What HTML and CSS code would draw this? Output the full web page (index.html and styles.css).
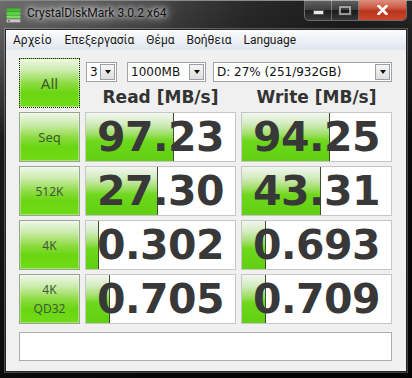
FILE: index.html
```html
<!DOCTYPE html>
<html lang="el">
<head>
<meta charset="utf-8">
<title>CrystalDiskMark 3.0.2 x64</title>
<link rel="stylesheet" href="styles.css">
</head>
<body>
<div class="window">
    <div class="titlebar">
        <svg class="app-icon" width="15" height="15" viewBox="0 0 15 15">
            <rect x="0.5" y="0.5" width="14" height="3" rx="1" fill="#39c424"/>
            <rect x="0.5" y="4" width="14" height="3" rx="1" fill="#52d83a"/>
            <rect x="0.5" y="7.5" width="14" height="3" rx="1" fill="#7ce060"/>
            <rect x="0.5" y="11" width="14" height="3.5" rx="0.8" fill="#c8c8c8" stroke="#7a7a7a" stroke-width="0.6"/>
            <rect x="2" y="12.2" width="2" height="1.2" fill="#555"/>
        </svg>
        <span class="title">CrystalDiskMark 3.0.2 x64</span>
        <div class="caption">
            <div class="cap-btn cap-min"><span class="glyph-min"></span></div>
            <div class="cap-btn cap-max"><span class="glyph-max"></span></div>
            <div class="cap-btn cap-close">
                <svg width="11" height="10" viewBox="0 0 11 10">
                    <path d="M1.5 1 L9.5 9 M9.5 1 L1.5 9" stroke="#fff" stroke-width="2.6" stroke-linecap="square"/>
                </svg>
            </div>
        </div>
    </div>

    <div class="client">
        <div class="menubar">
            <span class="menu-item">Αρχείο</span>
            <span class="menu-item">Επεξεργασία</span>
            <span class="menu-item">Θέμα</span>
            <span class="menu-item">Βοήθεια</span>
            <span class="menu-item">Language</span>
        </div>

        <div class="panel">
            <div class="grid">
                <div class="label-btn all">All</div>
                <div class="head">
                    <div class="selects">
                        <div class="combo combo-count"><span>3</span><i class="arrow"></i></div>
                        <div class="combo combo-size"><span>1000MB</span><i class="arrow"></i></div>
                        <div class="combo combo-drive"><span>D: 27% (251/932GB)</span><i class="arrow"></i></div>
                    </div>
                    <div class="heads">
                        <div class="head-title">Read [MB/s]</div>
                        <div class="head-title">Write [MB/s]</div>
                    </div>
                </div>

                <div class="label-btn seq">Seq</div>
                <div class="cell" style="--w:88px">97.23</div>
                <div class="cell" style="--w:88px">94.25</div>

                <div class="label-btn small">512K</div>
                <div class="cell" style="--w:72px">27.30</div>
                <div class="cell" style="--w:79px">43.31</div>

                <div class="label-btn small">4K</div>
                <div class="cell" style="--w:13px">0.302</div>
                <div class="cell" style="--w:24px">0.693</div>

                <div class="label-btn small two-line">4K<br>QD32</div>
                <div class="cell" style="--w:24px">0.705</div>
                <div class="cell" style="--w:24px">0.709</div>
            </div>
            <div class="comment"></div>
        </div>
    </div>
</div>
</body>
</html>
```

FILE: styles.css
```css
html, body {
    margin: 0;
    padding: 0;
    background: #0c0c0c;
}

.window {
    width: 412px;
    height: 378px;
    display: flex;
    flex-direction: column;
    background:
        linear-gradient(to bottom, rgba(0,0,0,0) 0, rgba(0,0,0,0.2) 40px, rgba(0,0,0,0.75) 140px, rgba(0,0,0,0.9) 100%),
        linear-gradient(to right, #6e6e6e 0, #4e4e4e 30%, #2a2a2a 60%, #1c1c1c 85%, #262626 100%);
    box-shadow: inset 0 1px 0 #8a8a8a;
}

/* ---------- title bar ---------- */
.titlebar {
    height: 29px;
    display: flex;
    align-items: flex-start;
    padding-left: 6px;
}
.app-icon {
    margin-top: 8px;
    flex: none;
}
.title {
    margin-left: 6px;
    margin-top: 6px;
    font-family: Roboto, "Noto Sans", sans-serif;
    font-size: 12px;
    color: #111;
    text-shadow: 0 0 4px #e4e4e4, 0 0 8px #d8d8d8, 0 0 14px rgba(210,210,210,0.9), 0 0 20px rgba(190,190,190,0.7);
}
.caption {
    margin-left: auto;
    margin-right: 5px;
    display: flex;
    height: 20px;
    border: 1px solid rgba(255,255,255,0.35);
    border-top: none;
    border-radius: 0 0 5px 5px;
    overflow: hidden;
}
.cap-btn {
    display: flex;
    align-items: center;
    justify-content: center;
    height: 20px;
}
.cap-min, .cap-max {
    width: 26px;
    background: linear-gradient(to bottom, rgba(255,255,255,0.3), rgba(255,255,255,0.14) 50%, rgba(0,0,0,0.08) 51%, rgba(255,255,255,0.12));
    border-right: 1px solid rgba(255,255,255,0.3);
}
.glyph-min {
    width: 9px;
    height: 3px;
    margin-top: 5px;
    background: #e8e8e8;
    border: 1px solid #555;
}
.glyph-max {
    width: 8px;
    height: 5px;
    border: 2px solid rgba(200,200,200,0.7);
    box-shadow: 0 0 0 1px rgba(60,60,60,0.6);
}
.cap-close {
    width: 47px;
    background: linear-gradient(to bottom, #dc8f7e 0, #cc5a42 40%, #b8341b 55%, #c9472a 100%);
}

/* ---------- client ---------- */
.client {
    flex: 1;
    margin: 0 5px 6px 5px;
    background: #f0f0f0;
    border: 1px solid #262626;
    box-shadow: 0 0 0 1px rgba(255,255,255,0.25);
    display: flex;
    flex-direction: column;
}
.menubar {
    height: 20px;
    display: flex;
    align-items: center;
    padding-left: 1px;
    background: linear-gradient(to bottom, #fdfdfe 0, #eef1f6 50%, #dfe5ee 100%);
    font-family: Roboto, "Noto Sans", sans-serif;
    font-size: 12px;
    color: #1a1a1a;
}
.menu-item {
    padding: 0 6px;
}
.menu-item:first-child {
    padding-left: 6px;
    padding-right: 7px;
}

.panel {
    padding: 8px 13px 0 13px;
}
.grid {
    display: grid;
    grid-template-columns: 61px 151px 151px;
    grid-template-rows: repeat(5, 50px);
    column-gap: 5px;
    row-gap: 4px;
}

/* ---------- green label buttons ---------- */
.label-btn {
    box-sizing: border-box;
    display: flex;
    align-items: center;
    justify-content: center;
    text-align: center;
    border: 1px solid #97a48e;
    background: linear-gradient(to bottom, #eef7e8 0, #c9eba8 25%, #8fdc45 50%, #6ad612 70%, #70dc18 100%);
    box-shadow: inset 0 0 0 1px rgba(255,255,255,0.35);
    font-family: "Noto Sans", "DejaVu Sans", sans-serif;
    color: #3b5a2c;
}
.label-btn.all {
    border: 1px dotted #1e1e1e;
    font-size: 15px;
}
.label-btn.seq {
    font-size: 13px;
}
.label-btn.small {
    font-size: 12px;
    color: #44573a;
}
.label-btn.two-line {
    line-height: 19px;
}

/* ---------- header ---------- */
.head {
    grid-column: 2 / 4;
    display: flex;
    flex-direction: column;
}
.selects {
    display: flex;
    margin-top: 4px;
    height: 20px;
}
.combo {
    box-sizing: border-box;
    height: 20px;
    display: flex;
    align-items: center;
    justify-content: space-between;
    background: #fff;
    border: 1px solid #a3a3a3;
    padding: 0 1px 0 3px;
    font-family: "DejaVu Sans", Verdana, sans-serif;
    font-size: 12px;
    color: #111;
}
.combo-count { width: 31px; margin-left: 1px; }
.combo-size { width: 79px; margin-left: 10px; }
.combo-drive { width: 179px; margin-left: 7px; }
.arrow {
    box-sizing: border-box;
    width: 15px;
    height: 16px;
    border: 1px solid #9aa0a8;
    background: linear-gradient(to bottom, #f6f6f6, #dedede);
    display: flex;
    align-items: center;
    justify-content: center;
}
.arrow::after {
    content: "";
    border-left: 3.5px solid transparent;
    border-right: 3.5px solid transparent;
    border-top: 4px solid #111;
}
.heads {
    display: grid;
    grid-template-columns: 151px 151px;
    column-gap: 5px;
    margin-top: 4px;
}
.head-title {
    text-align: center;
    font-family: "DejaVu Sans", Verdana, sans-serif;
    font-weight: bold;
    font-size: 17px;
    line-height: 22px;
    color: #333;
}

/* ---------- value cells ---------- */
.cell {
    box-sizing: border-box;
    border: 1px solid #c6c6c6;
    background-color: #fff;
    background-image:
        linear-gradient(#3e4c36, #3e4c36),
        linear-gradient(to bottom, #f2f6ef 0, #d4ecc2 22%, #a6e070 42%, #6ed81c 58%, #60d010 100%);
    background-size: 1px 100%, var(--w) 100%;
    background-position: calc(var(--w) - 1px) 0, 0 0;
    background-repeat: no-repeat;
    text-align: center;
    padding-top: 1px;
    font-family: "DejaVu Sans", Verdana, sans-serif;
    font-weight: bold;
    font-size: 41px;
    line-height: 47px;
    color: #383838;
    letter-spacing: -0.5px;
}

.comment {
    margin-top: 8px;
    height: 29px;
    box-sizing: border-box;
    background: #fff;
    border: 1px solid #acacac;
    width: 373px;
}
```
